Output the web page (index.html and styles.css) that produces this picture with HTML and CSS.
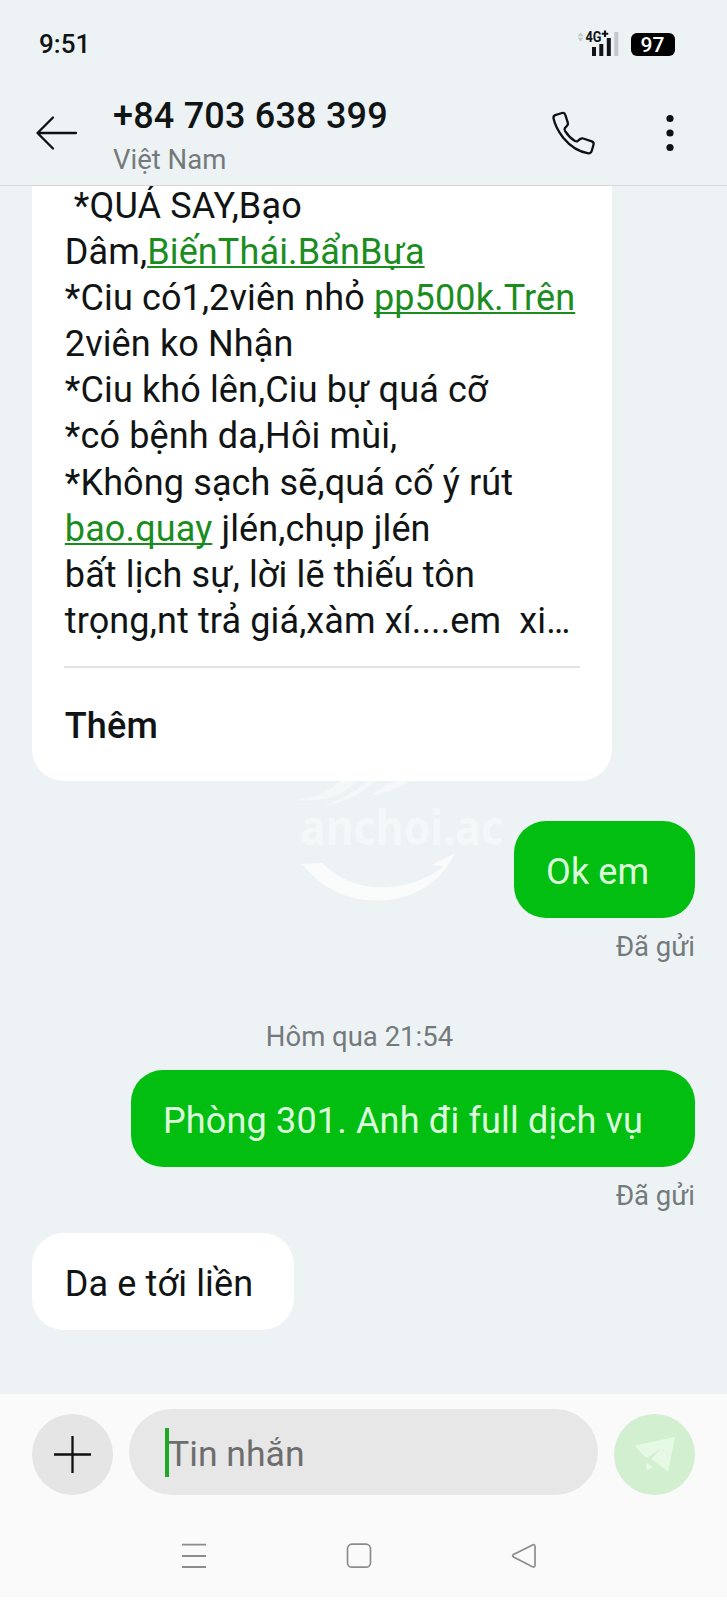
FILE: index.html
```html
<!DOCTYPE html>
<html lang="vi">
<head>
<meta charset="utf-8">
<title>+84 703 638 399</title>
<link rel="stylesheet" href="styles.css">
</head>
<body>
<div class="screen">
  <div class="status">
    <span class="clock">9:51</span>
    <div class="status-icons">
      <svg class="signal" width="44" height="28" viewBox="0 0 44 28">
        <path d="M1.500 7.200 4.500 3.500 7.500 7.200zM1.500 8.800 4.500 12.500 7.500 8.800z" fill="#c4c8c8"/>
        <g fill="#101414"><rect x="16" y="18" width="4" height="9"/><rect x="23.3" y="15" width="4" height="12"/><rect x="30.8" y="9" width="4" height="18"/></g>
        <rect x="38.3" y="3" width="4" height="24" fill="#c4c8c8"/>
        <text x="9.500" y="12.700" class="net" textLength="16" lengthAdjust="spacingAndGlyphs">4G</text>
        <path d="M29 1.600v6.400M25.800 4.800h6.400" stroke="#101414" stroke-width="2.100"/>
      </svg>
      <div class="battery">97</div>
    </div>
  </div>
  <header class="header">
    <svg class="back" width="44" height="36" viewBox="0 0 44 36"><path d="M19 2.500 3.500 18 19 33.500M3.500 18H42" fill="none" stroke="#0d1111" stroke-width="2.300" stroke-linecap="round" stroke-linejoin="round"/></svg>
    <div class="contact">
      <div class="number">+84 703 638 399</div>
      <div class="country">Việt Nam</div>
    </div>
    <svg class="phone" width="48" height="48" viewBox="0 0 48 48"><path d="M4.2 6.2 11 4q2.6-.7 3.3 1.8l2.5 7.8q.5 1.8-.8 3.2l-2 2.2q-.9 1.2 0 2.8 4 6.500 10 10.200 1.600.8 2.800-.2l2.400-1.800q1.300-1 3-.5l8.600 2.800q2.400.9 1.700 3.400l-1.800 6.300q-.7 2.400-3.200 2.300Q23.500 42.500 12.200 28.800 4.200 18.200 2.500 9.300 2.200 6.900 4.200 6.200z" fill="none" stroke="#0d1111" stroke-width="2.300" stroke-linejoin="round"/></svg>
    <svg class="more" width="10" height="38" viewBox="0 0 10 38"><g fill="#0d1111"><circle cx="5" cy="4.500" r="3.600"/><circle cx="5" cy="19" r="3.600"/><circle cx="5" cy="33.500" r="3.600"/></g></svg>
  </header>
  <main class="chat">
    <svg class="watermark" width="220" height="130" viewBox="0 0 220 130">
      <g fill="#fff">
        <path d="M0 20Q28 21 52 0H68Q45 25 0 20zM33 26Q62 16 78 0H86Q66 21 33 26zM81 16Q94 3 112 0L122 0Q105 11 81 16z" opacity=".6"/>
        <path d="M12 84L32 83Q60 110 98 107Q130 105 154 86L142 85L165 73Q148 110 105 119Q48 128 12 84z"/>
        <text x="10" y="65" class="mark" textLength="203" lengthAdjust="spacingAndGlyphs">anchoi.ac</text>
      </g>
    </svg>
    <article class="bubble card">
      <div class="message">
        <div>&nbsp;*QUÁ SAY,Bạo</div>
        <div>Dâm,<span class="link">BiếnThái.BẩnBựa</span></div>
        <div>*Ciu có1,2viên nhỏ <span class="link">pp500k.Trên</span></div>
        <div>2viên ko Nhận</div>
        <div>*Ciu khó lên,Ciu bự quá cỡ</div>
        <div>*có bệnh da,Hôi mùi,</div>
        <div>*Không sạch sẽ,quá cố ý rút</div>
        <div><span class="link">bao.quay</span> jlén,chụp jlén</div>
        <div>bất lịch sự, lời lẽ thiếu tôn</div>
        <div>trọng,nt trả giá,xàm xí....em&nbsp; xi…</div>
      </div>
      <div class="expand">Thêm</div>
    </article>
    <div class="bubble sent first">Ok em</div>
    <div class="state">Đã gửi</div>
    <div class="date">Hôm qua 21:54</div>
    <div class="bubble sent second">Phòng 301. Anh đi full dịch vụ</div>
    <div class="state">Đã gửi</div>
    <div class="bubble received">Da e tới liền</div>
  </main>
  <footer class="footer">
    <div class="composer">
      <div class="round add"><svg width="39" height="39" viewBox="0 0 39 39"><path d="M19.500 1v37M1 19.500h37" stroke="#101010" stroke-width="2.300"/></svg></div>
      <div class="field"><i class="caret"></i><span>Tin nhắn</span></div>
      <div class="round send"><svg width="81" height="81" viewBox="0 0 81 81"><path d="M20.500 31.500 61 23 54 57.500 37 45 47 34.500 34 43.500 31 43zM31.500 48 38.500 53 33 56.500z" fill="#e5f9e5"/></svg></div>
    </div>
    <nav class="nav">
      <svg width="26" height="28" viewBox="0 0 26 28"><path d="M1 2.700h24M1 14h24M1 25h24" stroke="#8c8c8c" stroke-width="1.800"/></svg>
      <svg width="26" height="28" viewBox="0 0 26 28"><rect x="1.500" y="2.200" width="23" height="23" rx="4.500" fill="none" stroke="#8c8c8c" stroke-width="1.700"/></svg>
      <svg width="26" height="28" viewBox="0 0 26 28"><path d="M2.500 12.500Q.8 13.800 2.500 15L21.500 24.700Q24 25.500 24 23V4.500Q24 2 21.500 3z" fill="none" stroke="#8c8c8c" stroke-width="1.700"/></svg>
    </nav>
  </footer>
</div>
</body>
</html>
```

FILE: styles.css
```css
* { box-sizing: border-box; }
body { margin: 0; font-family: Roboto, "Noto Sans", sans-serif; color: #111414; }
svg { display: block; flex: none; }
.screen { width: 727px; height: 1600px; background: #edf3f5; display: flex; flex-direction: column; overflow: hidden; }

.status { height: 82px; padding: 29px 52px 0 39px; display: flex; justify-content: space-between; align-items: flex-start; }
.clock { font-size: 26px; font-weight: 500; line-height: 30px; }
.status-icons { display: flex; gap: 11px; }
.net { font: 700 14px Roboto, sans-serif; fill: #101414; }
.battery { margin-top: 4px; width: 44px; height: 23px; border-radius: 6px; background: #000; color: #fff; font-size: 21px; font-weight: 500; line-height: 24px; text-align: center; padding-right: 1px; }

.header { height: 104px; flex: none; border-bottom: 1px solid #d3d8da; display: flex; align-items: flex-start; padding: 0 52px 0 34px; }
.back { margin-top: 33px; }
.contact { margin-left: 35px; flex: 1; white-space: nowrap; }
.number { font-size: 36px; font-weight: 500; line-height: 42px; margin-top: 13px; letter-spacing: .2px; }
.country { font-size: 27.5px; line-height: 32px; margin-top: 7px; color: #747a7b; }
.phone { margin-top: 27px; margin-right: 66px; }
.more { margin-top: 32px; }

.chat { position: relative; height: 1208px; flex: none; overflow: hidden; display: flex; flex-direction: column; padding: 0 32px; font-size: 36px; white-space: nowrap; }
.watermark { position: absolute; left: 290px; top: 594px; opacity: .75; }
.mark { font: 700 48px "Noto Sans", sans-serif; opacity: .6; }
.bubble { border-radius: 32px; padding: 0 32px; line-height: 102px; height: 97px; flex: none; letter-spacing: .13px; }
.card { width: 580px; height: 595px; background: #fff; border-radius: 0 0 32px 32px; align-self: flex-start; }
.message { margin-top: -3px; line-height: 46.1px; height: 485px; border-bottom: 2px solid #e2e3e3; text-indent: .8px; }
.link { color: #1b8d1f; text-decoration: underline; text-decoration-thickness: 2px; text-underline-offset: 2px; text-decoration-skip-ink: none; }
.expand { font-weight: 500; line-height: 42px; margin-top: 37px; text-indent: .8px; }
.sent { align-self: flex-end; background: #02be10; color: #dcfcdc; }
.first { margin-top: 40px; width: 181px; }
.state { align-self: flex-end; margin-top: 13px; font-size: 27.5px; line-height: 32px; color: #747a7b; }
.date { align-self: center; margin-top: 58px; font-size: 27.5px; line-height: 32px; color: #747a7b; position: relative; left: -4px; }
.second { margin-top: 17px; width: 564px; letter-spacing: .16px; }
.received { align-self: flex-start; margin-top: 21px; width: 262px; background: #fff; text-indent: .8px; }

.footer { flex: 1; background: #fafafa; border-bottom: 3px solid #fdfdfd; }
.composer { display: flex; align-items: flex-end; gap: 16px; padding: 15px 32px 0; }
.round { width: 81px; height: 81px; border-radius: 50%; display: flex; align-items: center; justify-content: center; flex: none; }
.add { background: #e5e5e5; }
.send { background: #d2f0d0; }
.field { flex: 1; height: 86px; border-radius: 43px; background: #e7e7e7; display: flex; align-items: center; padding-left: 36px; font-size: 35.6px; color: #6d6d6d; }
.field span { padding-top: 4px; }
.caret { width: 4px; height: 49px; background: #1da823; margin-right: -1px; }
.nav { display: flex; justify-content: space-between; padding: 47px 190px 0 181px; }
```
